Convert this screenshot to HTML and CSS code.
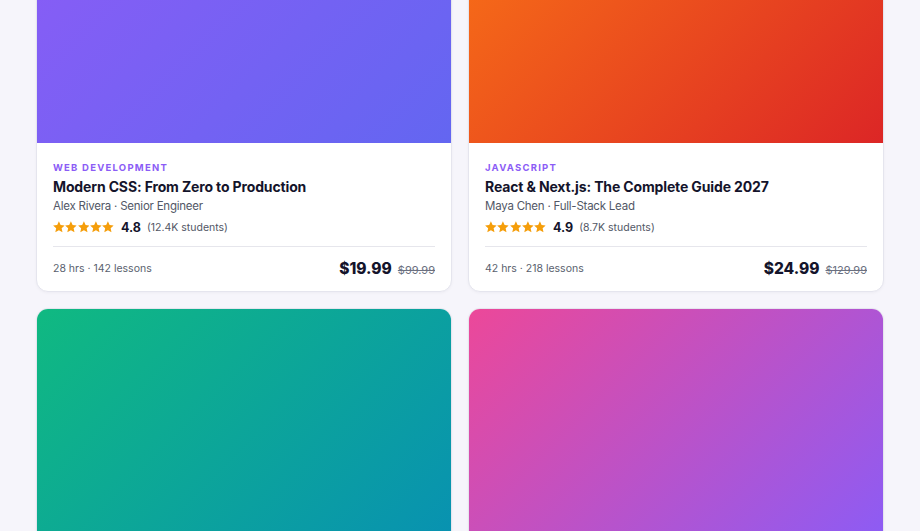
FILE: index.html
```html
<!DOCTYPE html>
<html lang="en">
<head>
    <meta charset="UTF-8">
    <meta name="viewport" content="width=device-width, initial-scale=1.0">
    <title>Courses</title>
    <link rel="stylesheet" href="styles.css">
</head>
<body>
    <svg width="0" height="0" style="position:absolute">
        <defs>
            <symbol id="star" viewBox="1 1.2 22 21.4">
                <path d="M12 1.5l3.2 7 7.6.8-5.7 5.1 1.6 7.5L12 18.1 5.3 21.9l1.6-7.5L1.2 9.3l7.6-.8z" fill="currentColor"/>
            </symbol>
        </defs>
    </svg>

    <div class="grid">
        <!-- Card 1 -->
        <div class="card">
            <div class="cover cover-violet"></div>
            <div class="card-body">
                <div class="category">Web Development</div>
                <h3 class="title">Modern CSS: From Zero to Production</h3>
                <div class="author">Alex Rivera · Senior Engineer</div>
                <div class="rating">
                    <span class="stars">
                        <svg><use href="#star"/></svg><svg><use href="#star"/></svg><svg><use href="#star"/></svg><svg><use href="#star"/></svg><svg><use href="#star"/></svg>
                    </span>
                    <span class="score">4.8</span>
                    <span class="count">(12.4K students)</span>
                </div>
                <div class="card-footer">
                    <span class="meta">28 hrs · 142 lessons</span>
                    <span class="price">
                        <span class="now">$19.99</span>
                        <s class="was">$99.99</s>
                    </span>
                </div>
            </div>
        </div>

        <!-- Card 2 -->
        <div class="card">
            <div class="cover cover-orange"></div>
            <div class="card-body">
                <div class="category">JavaScript</div>
                <h3 class="title">React &amp; Next.js: The Complete Guide 2027</h3>
                <div class="author">Maya Chen · Full-Stack Lead</div>
                <div class="rating">
                    <span class="stars">
                        <svg><use href="#star"/></svg><svg><use href="#star"/></svg><svg><use href="#star"/></svg><svg><use href="#star"/></svg><svg><use href="#star"/></svg>
                    </span>
                    <span class="score">4.9</span>
                    <span class="count">(8.7K students)</span>
                </div>
                <div class="card-footer">
                    <span class="meta">42 hrs · 218 lessons</span>
                    <span class="price">
                        <span class="now">$24.99</span>
                        <s class="was">$129.99</s>
                    </span>
                </div>
            </div>
        </div>

        <!-- Card 3 (below the fold) -->
        <div class="card">
            <div class="cover cover-green"></div>
        </div>

        <!-- Card 4 (below the fold) -->
        <div class="card">
            <div class="cover cover-pink"></div>
        </div>
    </div>
</body>
</html>
```

FILE: styles.css
```css
body {
    margin: 0;
    background: #f6f5fb;
    font-family: Inter, "Noto Sans", sans-serif;
    color: #14142b;
}

.grid {
    display: grid;
    grid-template-columns: 1fr 1fr;
    gap: 16px;
    width: 848px;
    margin: -98px auto 0;
}

.card {
    background: #fff;
    border: 1px solid #e5e5ee;
    border-radius: 12px;
    overflow: hidden;
    box-shadow: 0 1px 3px rgba(20, 20, 50, 0.04);
}

.cover {
    height: 240px;
}

.cover-violet { background: linear-gradient(135deg, #8b5cf6, #6366f1); }
.cover-orange { background: linear-gradient(135deg, #f97316, #dc2626); }
.cover-green  { background: linear-gradient(135deg, #10b981, #0891b2); }
.cover-pink   { background: linear-gradient(135deg, #ec4899, #8b5cf6); }

.card-body {
    padding: 19px 16px 13px;
}

.category {
    font-size: 9.5px;
    line-height: 12px;
    font-weight: 700;
    letter-spacing: 0.13em;
    text-transform: uppercase;
    color: #8b5cf6;
}

.title {
    margin: 4px 0 0;
    font-size: 14px;
    line-height: 18px;
    font-weight: 700;
    letter-spacing: -0.01em;
    color: #14142b;
}

.author {
    font-size: 11.5px;
    line-height: 20px;
    letter-spacing: -0.02em;
    color: #525766;
}

.rating {
    display: flex;
    align-items: center;
    height: 20px;
    margin-top: 1px;
}

.stars {
    display: flex;
    gap: 0.5px;
    color: #f59e0b;
    margin-right: 7px;
}

.stars svg {
    width: 11.8px;
    height: 11.8px;
}

.score {
    font-size: 12.5px;
    font-weight: 700;
    color: #14142b;
    margin-right: 6px;
}

.count {
    font-size: 10.5px;
    color: #525766;
}

.card-footer {
    display: flex;
    justify-content: space-between;
    align-items: center;
    height: 20px;
    margin-top: 9px;
    padding-top: 11px;
    border-top: 1px solid #e6e6ec;
}

.meta {
    font-size: 10.5px;
    color: #5a5f6e;
}

.price {
    display: flex;
    align-items: baseline;
    gap: 6px;
}

.now {
    font-size: 15.5px;
    font-weight: 800;
    color: #14142b;
}

.was {
    font-size: 11px;
    color: #6b7080;
}
```
